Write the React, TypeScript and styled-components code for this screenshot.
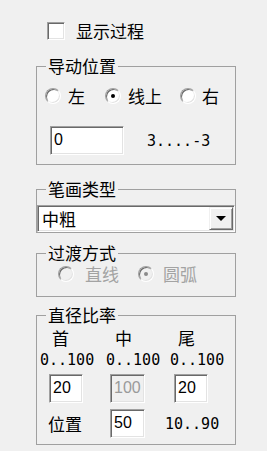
import React from "react";
import styled, { createGlobalStyle, css } from "styled-components";

const Global = createGlobalStyle`
  html, body { margin: 0; padding: 0; background: #f0f0f0; }
  body {
    font-family: "Noto Sans CJK SC", "Noto Sans", sans-serif;
    font-size: 17px;
    color: #000;
  }
`;

const sunken = css`
  box-sizing: border-box;
  border: 1px solid;
  border-color: #a0a0a0 #ffffff #ffffff #a0a0a0;
  box-shadow: inset 1px 1px 0 #696969, inset -1px -1px 0 #e3e3e3;
`;

const Page = styled.div`
  display: flex;
  flex-direction: column;
  width: 200px;
  padding: 22px 0 8px 36px;
`;

const CheckRow = styled.label`
  display: flex;
  align-items: center;
  gap: 11px;
  height: 18px;
  line-height: 18px;
  margin-left: 11px;
  margin-bottom: 16px;
`;

const CheckBox = styled.span`
  ${sunken};
  width: 18px;
  height: 18px;
  background: #fff;
`;

const Group = styled.fieldset<{ $mt?: number }>`
  margin: ${(p) => p.$mt ?? 0}px 0 0 0;
  padding: 0;
  min-width: 0;
  border: 1px solid #a0a0a0;
`;

const Legend = styled.legend`
  margin-left: 9px;
  padding: 0 2px;
  height: 20px;
  line-height: 20px;
  font-size: 17px;
`;

const Body = styled.div<{ $pl?: number; $pt?: number; $pb?: number }>`
  display: flex;
  flex-direction: column;
  padding: ${(p) => p.$pt ?? 0}px 0 ${(p) => p.$pb ?? 0}px ${(p) => p.$pl ?? 0}px;
`;

const RadioRow = styled.div<{ $cols: string }>`
  display: grid;
  grid-template-columns: ${(p) => p.$cols};
  height: 18px;
  align-items: center;
`;

const Option = styled.label<{ $gap: number; $disabled?: boolean }>`
  display: flex;
  align-items: center;
  gap: ${(p) => p.$gap}px;
  line-height: 18px;
  white-space: nowrap;
  color: ${(p) => (p.$disabled ? "#a3a3a3" : "#000")};
`;

const RadioCircle = styled.span<{ $disabled?: boolean }>`
  ${sunken};
  width: 16px;
  height: 16px;
  border-radius: 50%;
  background: ${(p) => (p.$disabled ? "#f0f0f0" : "#fff")};
  display: flex;
  align-items: center;
  justify-content: center;
  flex: none;
`;

const Dot = styled.span<{ $disabled?: boolean }>`
  width: 4px;
  height: 4px;
  border-radius: 50%;
  background: ${(p) => (p.$disabled ? "#8a8a8a" : "#000")};
`;

const Radio = ({
  label,
  checked,
  disabled,
  gap,
}: {
  label: string;
  checked?: boolean;
  disabled?: boolean;
  gap: number;
}) => (
  <Option $gap={gap} $disabled={disabled}>
    <RadioCircle $disabled={disabled}>{checked && <Dot $disabled={disabled} />}</RadioCircle>
    {label}
  </Option>
);

const EditRow = styled.div<{ $mt: number }>`
  display: flex;
  align-items: center;
  margin-top: ${(p) => p.$mt}px;
`;

const Edit = styled.div<{ $w: number; $ml?: number; $disabled?: boolean }>`
  ${sunken};
  width: ${(p) => p.$w}px;
  height: 29px;
  margin-left: ${(p) => p.$ml ?? 0}px;
  padding: 0 0 1px 3px;
  display: flex;
  align-items: center;
  background: ${(p) => (p.$disabled ? "#f0f0f0" : "#fff")};
  color: ${(p) => (p.$disabled ? "#9a9a9a" : "#000")};
  font-family: "Liberation Sans", Arial, sans-serif;
  font-size: 16px;
  flex: none;
`;

const Mono = styled.span<{ $ml?: number }>`
  font-family: "DejaVu Sans Mono", "Liberation Mono", monospace;
  font-size: 15px;
  line-height: 18px;
  margin-left: ${(p) => p.$ml ?? 0}px;
  white-space: nowrap;
`;

const Combo = styled.div`
  ${sunken};
  margin-top: 6px;
  height: 27px;
  display: flex;
  align-items: stretch;
  background: #fff;
`;

const ComboText = styled.span`
  flex: 1;
  display: flex;
  align-items: center;
  padding-left: 4px;
  font-size: 17px;
`;

const DropButton = styled.span`
  box-sizing: border-box;
  width: 24px;
  margin: 1px 1px 1px 0;
  background: #f0f0f0;
  border: 1px solid;
  border-color: #f0f0f0 #696969 #696969 #f0f0f0;
  box-shadow: inset 1px 1px 0 #fff, inset -1px -1px 0 #a0a0a0;
  display: flex;
  align-items: center;
  justify-content: center;
`;

const Arrow = styled.span`
  width: 0;
  height: 0;
  border-left: 5px solid transparent;
  border-right: 5px solid transparent;
  border-top: 5px solid #000;
`;

const Columns = styled.div`
  display: grid;
  grid-template-columns: 66px 64px 64px;
  padding-left: 3px;
  margin-top: 4px;
`;

const Column = styled.div`
  display: flex;
  flex-direction: column;
  align-items: flex-start;
`;

const Head = styled.span<{ $pl: number }>`
  padding-left: ${(p) => p.$pl}px;
  line-height: 18px;
  height: 18px;
  margin-bottom: 4px;
`;

const ColEdit = styled(Edit)`
  margin-top: 5px;
`;

const LastRow = styled.div`
  display: flex;
  align-items: center;
  padding-left: 11px;
  margin-top: 6px;
`;

const RowLabel = styled.span`
  width: 62px;
  line-height: 18px;
`;

export default function App() {
  return (
    <>
      <Global />
      <Page>
        <CheckRow>
          <CheckBox />
          显示过程
        </CheckRow>

        <Group>
          <Legend>导动位置</Legend>
          <Body $pl={8} $pt={11} $pb={9}>
            <RadioRow $cols="60px 75px auto">
              <Radio label="左" gap={7} />
              <Radio label="线上" gap={7} checked />
              <Radio label="右" gap={6} />
            </RadioRow>
            <EditRow $mt={21}>
              <Edit $w={74} $ml={5}>0</Edit>
              <Mono $ml={23}>3....-3</Mono>
            </EditRow>
          </Body>
        </Group>

        <Group $mt={14}>
          <Legend>笔画类型</Legend>
          <Combo>
            <ComboText>中粗</ComboText>
            <DropButton>
              <Arrow />
            </DropButton>
          </Combo>
        </Group>

        <Group $mt={10}>
          <Legend>过渡方式</Legend>
          <Body $pl={21} $pt={2} $pb={13}>
            <RadioRow $cols="80px auto">
              <Radio label="直线" gap={11} disabled />
              <Radio label="圆弧" gap={9} disabled checked />
            </RadioRow>
          </Body>
        </Group>

        <Group $mt={8}>
          <Legend>直径比率</Legend>
          <Body $pb={6}>
            <Columns>
              <Column>
                <Head $pl={12}>首</Head>
                <Mono>0..100</Mono>
                <ColEdit $w={34} $ml={9}>20</ColEdit>
              </Column>
              <Column>
                <Head $pl={9}>中</Head>
                <Mono>0..100</Mono>
                <ColEdit $w={35} $ml={4} $disabled>100</ColEdit>
              </Column>
              <Column>
                <Head $pl={8}>尾</Head>
                <Mono>0..100</Mono>
                <ColEdit $w={34} $ml={4}>20</ColEdit>
              </Column>
            </Columns>
            <LastRow>
              <RowLabel>位置</RowLabel>
              <Edit $w={35}>50</Edit>
              <Mono $ml={20}>10..90</Mono>
            </LastRow>
          </Body>
        </Group>
      </Page>
    </>
  );
}
